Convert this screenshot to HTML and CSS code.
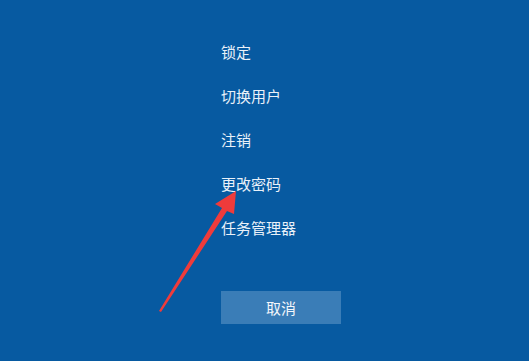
FILE: index.html
```html
<!DOCTYPE html>
<html lang="zh-CN">
<head>
<meta charset="utf-8">
<title>选项</title>
<link rel="stylesheet" href="styles.css">
</head>
<body>
<div class="screen">
  <ul class="menu">
    <li class="item">锁定</li>
    <li class="item">切换用户</li>
    <li class="item">注销</li>
    <li class="item">更改密码</li>
    <li class="item">任务管理器</li>
  </ul>
  <div class="actions">
    <button class="cancel">取消</button>
  </div>
  <svg class="arrow" width="529" height="361" viewBox="0 0 529 361">
    <polygon points="159,311 222,208 215,204 236,191 234,214 227,211 161,312" fill="#ef3b3b"/>
  </svg>
</div>
</body>
</html>
```
FILE: styles.css
```css
html, body {
  margin: 0;
  padding: 0;
}
body {
  background: #075aa1;
  font-family: "Noto Sans CJK SC", "Noto Sans", sans-serif;
  color: #e9f1f9;
}
.screen {
  position: relative;
  width: 529px;
  height: 361px;
  overflow: hidden;
  box-sizing: border-box;
  padding: 30px 0 0 221px;
}
.menu {
  list-style: none;
  margin: 0;
  padding: 0;
}
.item {
  height: 44px;
  line-height: 44px;
  font-size: 15px;
}
.actions {
  margin-top: 41px;
}
.cancel {
  display: block;
  width: 120px;
  height: 33px;
  border: 0;
  padding: 0;
  background: #3a7db7;
  color: #f2f6fb;
  font-family: "Noto Sans CJK SC", "Noto Sans", sans-serif;
  font-size: 15px;
}
.arrow {
  position: absolute;
  left: 0;
  top: 0;
}
```
